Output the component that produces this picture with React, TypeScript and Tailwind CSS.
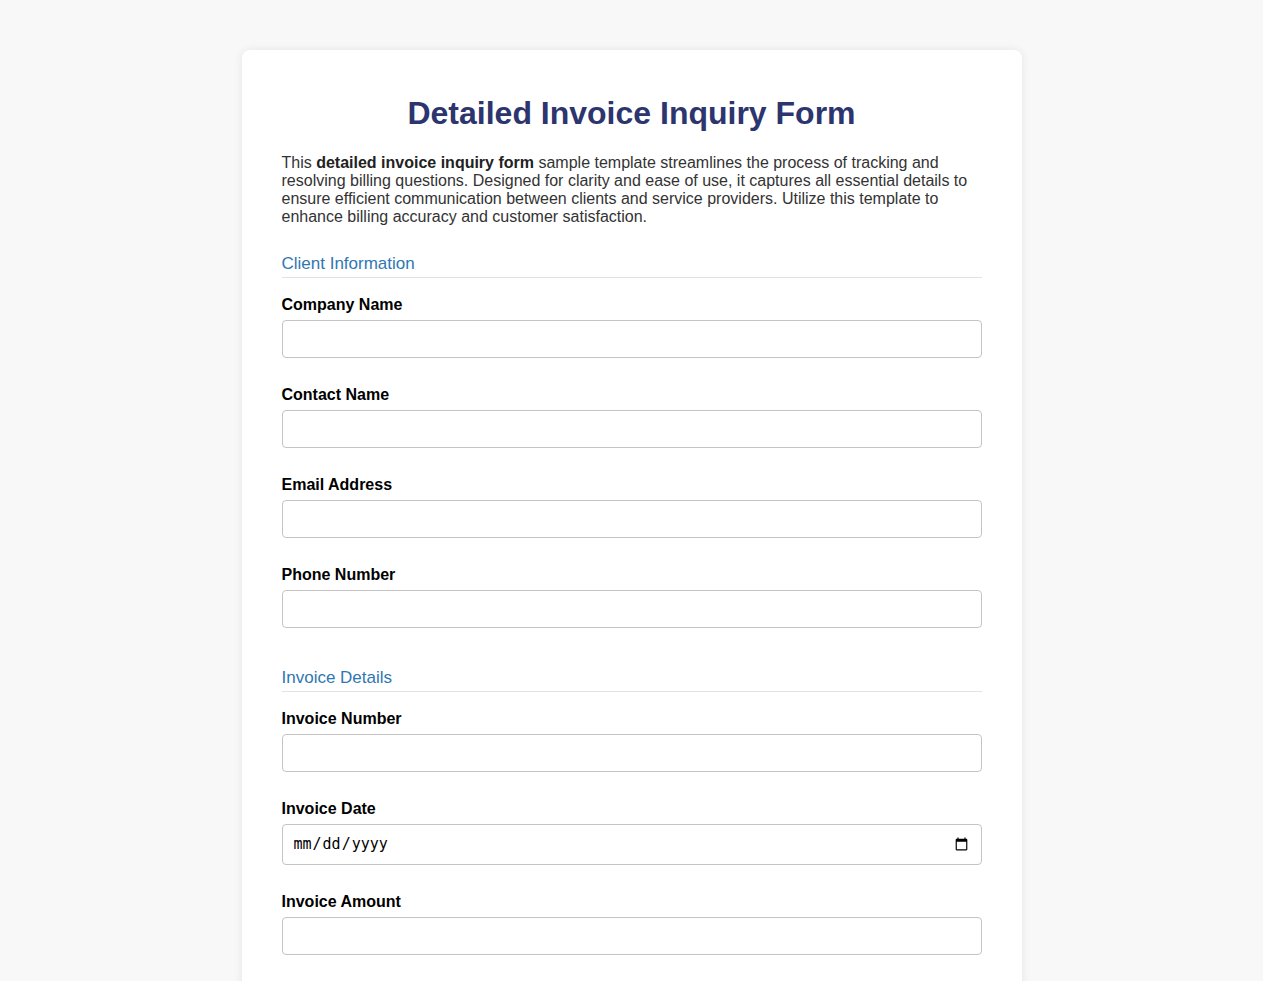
import React from 'react';

type Field = { label: string; type?: string };

const clientFields: Field[] = [
  { label: 'Company Name' },
  { label: 'Contact Name' },
  { label: 'Email Address', type: 'email' },
  { label: 'Phone Number', type: 'tel' },
];

const invoiceFields: Field[] = [
  { label: 'Invoice Number' },
  { label: 'Invoice Date', type: 'date' },
  { label: 'Invoice Amount' },
];

const SectionTitle: React.FC<{ title: string }> = ({ title }) => (
  <h2 className="text-[17px] leading-[19px] font-normal text-[#2f77b1] pt-[1px] pb-[4px] border-b border-[#e2e2e2] mb-[17px]">
    {title}
  </h2>
);

const FormField: React.FC<Field> = ({ label, type = 'text' }) => {
  const id = label.toLowerCase().replace(/\s+/g, '-');
  return (
    <div className="mb-[27px]">
      <label htmlFor={id} className="block text-[16px] leading-[18px] font-bold text-black pt-[1px] mb-[6px]">
        {label}
      </label>
      {type === 'date' ? (
        <input
          id={id}
          type="date"
          className="block w-full h-[41px] px-[10px] border border-[#c4c4c4] rounded-[4px] bg-white text-[15px] text-black font-['DejaVu_Sans_Mono',monospace]"
        />
      ) : (
        <input
          id={id}
          type={type}
          className="block w-full h-[38px] px-[10px] border border-[#c4c4c4] rounded-[4px] bg-white text-[14px]"
        />
      )}
    </div>
  );
};

const App: React.FC = () => {
  return (
    <div className="min-h-screen bg-[#f8f8f8] pt-[50px] pb-[40px] font-['Liberation_Sans',Arial,sans-serif]">
      <div className="w-[780px] mx-auto bg-white rounded-[8px] shadow-[0_0_10px_rgba(0,0,0,0.08)] px-[40px] pt-[45px] pb-[20px]">
        {/* Header */}
        <h1 className="text-center text-[32px] leading-[37px] font-bold text-[#2c356d] mb-[22px]">
          Detailed Invoice Inquiry Form
        </h1>
        <p className="text-[16px] leading-[18px] text-[#333333] mb-[27px]">
          This <strong className="text-[#222]">detailed invoice inquiry form</strong> sample template streamlines the
          process of tracking and resolving billing questions. Designed for clarity and ease of use, it captures all
          essential details to ensure efficient communication between clients and service providers. Utilize this
          template to enhance billing accuracy and customer satisfaction.
        </p>

        {/* Client info */}
        <SectionTitle title="Client Information" />
        {clientFields.map((f) => (
          <FormField key={f.label} {...f} />
        ))}

        {/* Invoice details */}
        <div className="pt-[12px]">
          <SectionTitle title="Invoice Details" />
          {invoiceFields.map((f) => (
            <FormField key={f.label} {...f} />
          ))}
        </div>
      </div>
    </div>
  );
};

export default App;
